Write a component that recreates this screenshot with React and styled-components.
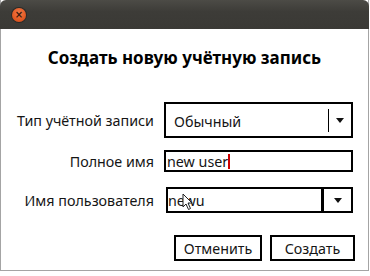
import React from 'react'
import { styled, createGlobalStyle } from 'styled-components'

const GlobalStyle = createGlobalStyle`
    html, body {
        margin: 0;
        padding: 0;
        background: #ffffff;
    }
    body {
        font-family: "Noto Sans", "DejaVu Sans", sans-serif;
        color: #151515;
    }
`

const Window = styled.div`
    width: 369px;
    height: 271px;
    box-sizing: border-box;
    border: 1px solid #a4a4a4;
    border-top: none;
    display: flex;
    flex-direction: column;
    background: #ffffff;
`
const TitleBar = styled.div`
    height: 29px;
    margin: 0 -1px;
    border-radius: 6px 6px 0 0;
    background: linear-gradient(#4c4b46, #3d3c38 40%, #3a3935);
    display: flex;
    align-items: center;
    padding: 1px 0 0 12px;
    box-sizing: border-box;
`
const CloseButton = styled.div`
    width: 14px;
    height: 14px;
    border-radius: 50%;
    background: radial-gradient(circle at 50% 35%, #f47a4a, #e35a23 60%, #c9461a);
    box-shadow: 0 0 0 1px #2b2a27;
    display: flex;
    align-items: center;
    justify-content: center;
    color: #3a1a0c;
    font-size: 10px;
    font-weight: 700;
    line-height: 1;
    font-family: "DejaVu Sans", sans-serif;
`
const Body = styled.div`
    flex: 1;
    display: flex;
    flex-direction: column;
    padding: 0 12px 0 0;
`
const Heading = styled.h1`
    margin: 18px 0 0 0;
    font-size: 17px;
    font-weight: 700;
    text-align: center;
    line-height: 22px;
    color: #000;
    padding-left: 12px;
`
const Form = styled.div`
    display: flex;
    flex-direction: column;
    margin-top: 33px;
`
const Row = styled.div`
    display: flex;
    align-items: center;
    margin-top: ${p => p.$top || 0}px;
`
const Label = styled.div`
    width: 153px;
    margin-right: 10px;
    text-align: right;
    font-size: 14.3px;
    line-height: 18px;
    padding-top: 2px;
`
const Combo = styled.div`
    width: 189px;
    height: 36px;
    box-sizing: border-box;
    border: 2px solid #000;
    display: flex;
    align-items: center;
    font-size: 14.3px;
`
const ComboText = styled.div`
    flex: 1;
    padding-left: 8px;
    padding-top: 2px;
`
const Separator = styled.div`
    width: ${p => p.$w}px;
    height: ${p => p.$h};
    background: #000;
`
const ArrowBox = styled.div`
    width: ${p => p.$w}px;
    display: flex;
    justify-content: center;
    align-items: center;
`
const Arrow = styled.div`
    width: 0;
    height: 0;
    border-left: 4.5px solid transparent;
    border-right: 4.5px solid transparent;
    border-top: 5px solid #111;
`
const Entry = styled.div`
    width: 189px;
    height: 22px;
    box-sizing: border-box;
    border: 2px solid #000;
    display: flex;
    align-items: center;
    padding-left: 1px;
    font-size: 14.3px;
`
const Caret = styled.span`
    display: inline-block;
    width: 2px;
    height: 15px;
    background: #cc0000;
    vertical-align: middle;
`
const EditCombo = styled.div`
    position: relative;
    width: 187px;
    height: 26px;
    margin-left: 2px;
    box-sizing: border-box;
    border: 2px solid #000;
    display: flex;
    align-items: stretch;
    font-size: 14.3px;
`
const EditText = styled.div`
    flex: 1;
    display: flex;
    align-items: center;
    padding-left: 0;
`
const Pointer = styled.svg`
    position: absolute;
    left: 14px;
    top: 4px;
`
const Buttons = styled.div`
    display: flex;
    justify-content: flex-end;
    gap: 8px;
    margin-top: 22px;
    padding-right: 1px;
`
const Button = styled.button`
    width: ${p => p.$w}px;
    height: 26px;
    box-sizing: border-box;
    border: 2px solid #000;
    background: #fff;
    font-family: inherit;
    font-size: 14.3px;
    color: #151515;
    padding: 0;
`

function App() {
  return (
    <>
      <GlobalStyle />
      <Window>
        <TitleBar>
          <CloseButton>×</CloseButton>
        </TitleBar>
        <Body>
          <Heading>Создать новую учётную запись</Heading>
          <Form>
            <Row>
              <Label>Тип учётной записи</Label>
              <Combo>
                <ComboText>Обычный</ComboText>
                <Separator $w={1} $h="23px" />
                <ArrowBox $w={22}><Arrow /></ArrowBox>
              </Combo>
            </Row>
            <Row $top={12}>
              <Label>Полное имя</Label>
              <Entry>new user<Caret /></Entry>
            </Row>
            <Row $top={15}>
              <Label>Имя пользователя</Label>
              <EditCombo>
                <EditText>newu</EditText>
                <Separator $w={3} $h="100%" />
                <ArrowBox $w={27}><Arrow /></ArrowBox>
                <Pointer width="12" height="18" viewBox="0 0 12 18">
                  <path d="M1 1 L1 14 L4 11 L6.5 16.5 L8.5 15.5 L6 10 L10 10 Z" fill="#fff" stroke="#222" strokeWidth="1" strokeLinejoin="round" />
                </Pointer>
              </EditCombo>
            </Row>
          </Form>
          <Buttons>
            <Button $w={88}>Отменить</Button>
            <Button $w={85}>Создать</Button>
          </Buttons>
        </Body>
      </Window>
    </>
  )
}

export default App
